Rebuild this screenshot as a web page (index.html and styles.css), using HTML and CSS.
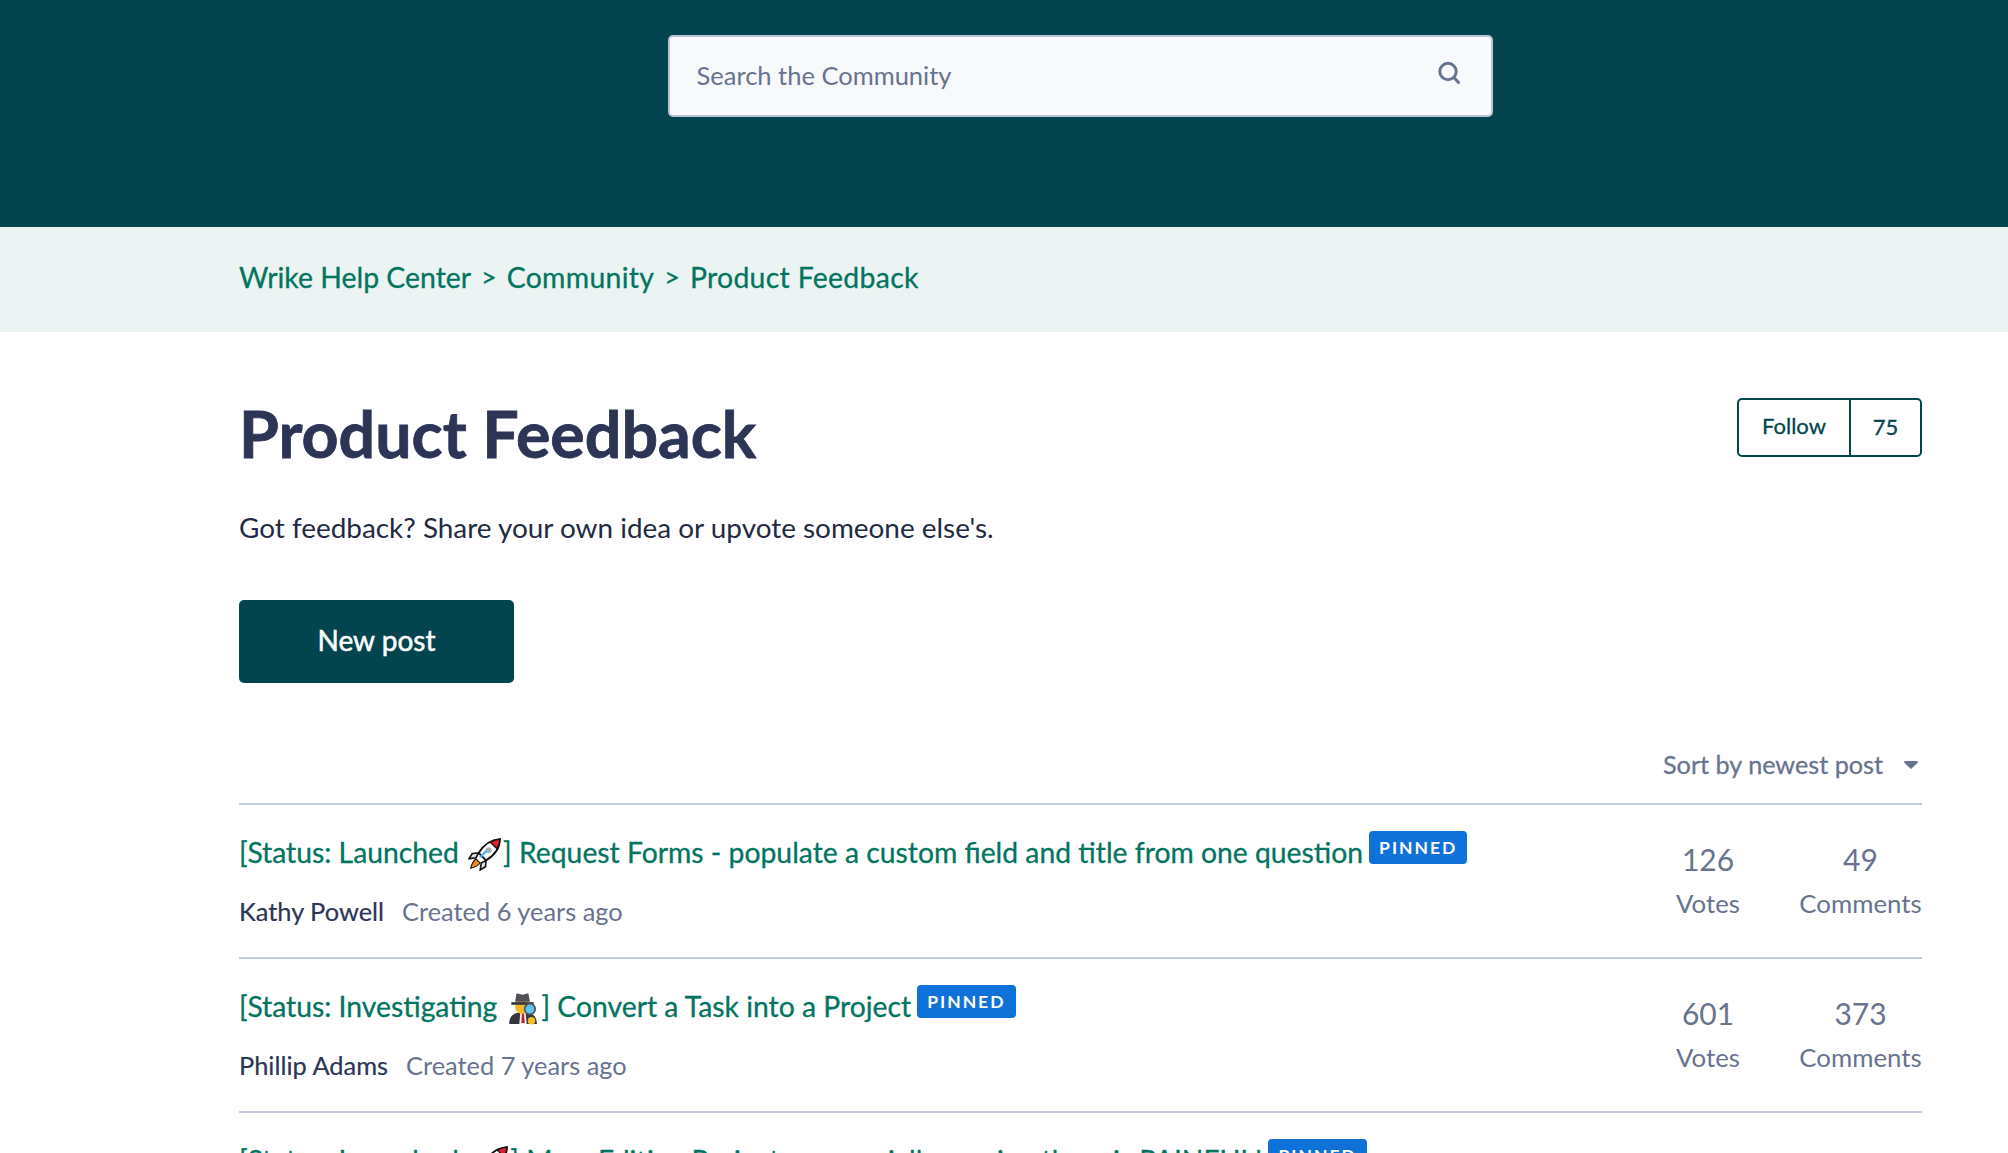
FILE: index.html
```html
<!DOCTYPE html>
<html lang="en">
<head>
    <meta charset="utf-8">
    <title>Product Feedback</title>
    <link rel="stylesheet" href="styles.css">
</head>
<body>

    <header class="hero">
        <form class="search">
            <span class="search-text">Search the Community</span>
            <svg class="search-icon" width="24" height="24" viewBox="0 0 24 24" fill="none" stroke="#68738f" stroke-width="3" stroke-linecap="round">
                <circle cx="11" cy="10.500" r="8.200"></circle>
                <path d="M17 16.500l4.500 5"></path>
            </svg>
        </form>
    </header>

    <nav class="crumbs">
        <a href="#">Wrike Help Center</a>
        <span class="sep">&gt;</span>
        <a href="#">Community</a>
        <span class="sep">&gt;</span>
        <a href="#">Product Feedback</a>
    </nav>

    <main class="content">
        <div class="topic-head">
            <h1>Product Feedback</h1>
            <div class="follow">
                <a href="#" class="follow-btn">Follow</a>
                <span class="follow-count">75</span>
            </div>
        </div>

        <p class="desc">Got feedback? Share your own idea or upvote someone else's.</p>

        <a href="#" class="new-post">New post</a>

        <div class="sort">
            <span>Sort by newest post</span>
            <svg class="caret" width="14" height="8" viewBox="0 0 14 8"><path d="M0 1.500Q0 0 1.500 0h11Q14 0 14 1.500L7 8z" fill="#68738f"></path></svg>
        </div>

        <ul class="posts">
            <li class="post">
                <div class="post-main">
                    <div class="post-title">
                        <a href="#">[Status: Launched
                            <svg class="emoji" viewBox="0 0 32 32"><path d="M30 2c-8 .5-15 5-20 13l7 7c8-5 13-12 13-20z" fill="#fff" stroke="#111" stroke-width="1.800"></path><path d="M30 2c-3 .2-6 1-9 2.800l6.200 6.200C29 8 30 5 30 2z" fill="#e0202e" stroke="#111" stroke-width="1.200"></path><circle cx="19.500" cy="12.500" r="2.800" fill="#a9b0b8"></circle><path d="M10 15l-6 .5-3 5 6.500-1zM17 22l-.5 6-5 3 1-6.500z" fill="#dfe6ec" stroke="#111" stroke-width="1.500"></path><path d="M11.500 19l6-6" stroke="#3db5ec" stroke-width="2"></path><path d="M7.500 20.500l4 4c-2 2.500-5 4-9 5 1-4 2.500-7 5-9z" fill="#f58a1f" stroke="#111" stroke-width="1"></path></svg>] Request Forms - populate a custom field and title from one question</a>
                        <span class="badge">PINNED</span>
                    </div>
                    <div class="post-meta">
                        <span class="author">Kathy Powell</span>
                        <span class="created">Created 6 years ago</span>
                    </div>
                </div>
                <div class="stat stat-votes"><b>126</b><span>Votes</span></div>
                <div class="stat stat-comments"><b>49</b><span>Comments</span></div>
            </li>
            <li class="post">
                <div class="post-main">
                    <div class="post-title">
                        <a href="#">[Status: Investigating
                            <svg class="emoji" viewBox="0 0 32 32"><path d="M3 31c0-8 5-11 13-11s13 3 13 11z" fill="#33363b"></path><path d="M13.500 20h5l1 11h-7z" fill="#f3f3f3"></path><path d="M15 21h2l.6 9h-3.200z" fill="#c4262e"></path><ellipse cx="15" cy="15" rx="6.500" ry="6.500" fill="#f6bb2b"></ellipse><path d="M8.500 10l1.500-8 5.500 1.500L21 2l1.500 8z" fill="#4f5156"></path><path d="M5 10.500h21v2.500H5z" fill="#33363b"></path><circle cx="22.500" cy="17" r="5" fill="#5ec4ef" stroke="#4a5560" stroke-width="1.600"></circle><circle cx="24" cy="28" r="3.500" fill="#f6bb2b"></circle></svg>] Convert a Task into a Project</a>
                        <span class="badge">PINNED</span>
                    </div>
                    <div class="post-meta">
                        <span class="author">Phillip Adams</span>
                        <span class="created">Created 7 years ago</span>
                    </div>
                </div>
                <div class="stat stat-votes"><b>601</b><span>Votes</span></div>
                <div class="stat stat-comments"><b>373</b><span>Comments</span></div>
            </li>
            <li class="post">
                <div class="post-main">
                    <div class="post-title">
                        <a href="#">[Status: Launched&nbsp;
                            <svg class="emoji" viewBox="0 0 32 32"><path d="M30 2c-8 .5-15 5-20 13l7 7c8-5 13-12 13-20z" fill="#fff" stroke="#111" stroke-width="1.800"></path><path d="M30 2c-3 .2-6 1-9 2.800l6.200 6.200C29 8 30 5 30 2z" fill="#e0202e" stroke="#111" stroke-width="1.200"></path></svg>] Mass Editing Projects - especially moving them is PAINFUL!</a>
                        <span class="badge">PINNED</span>
                    </div>
                </div>
            </li>
        </ul>
    </main>

</body>
</html>
```

FILE: styles.css
```css
html, body {
    height: 100%;
}

body {
    margin: 0;
    height: 1153px;
    overflow: hidden;
    font-family: "Lato", "Open Sans", sans-serif;
    color: #2f3941;
    background: #fff;
}

a {
    text-decoration: none;
}

.hero {
    height: 227px;
    box-sizing: border-box;
    padding-top: 35px;
    background: #03454f;
}

.search {
    width: 825px;
    height: 82px;
    box-sizing: border-box;
    margin: 0 auto;
    padding: 0 30px 2px 27px;
    transform: translateX(76px);
    display: flex;
    align-items: center;
    justify-content: space-between;
    background: #f8f9fb;
    border: 2px solid #b9c4d6;
    border-radius: 5px;
}

.search-text {
    font-size: 25.500px;
    color: #68738f;
}

.search-icon {
    margin-top: -4px;
}

.crumbs {
    height: 105px;
    box-sizing: border-box;
    padding: 0 0 6px 239px;
    display: flex;
    align-items: center;
    gap: 10px;
    background: #ebf4f2;
    font-size: 28.400px;
    -webkit-text-stroke: 0.3px #03745f;
}

.crumbs a {
    color: #03745f;
}

.crumbs .sep + a {
    letter-spacing: 0.3px;
}

.sep {
    color: #03745f;
    font-size: 27px;
}

.content {
    margin: 0 86px 0 239px;
}

.topic-head {
    display: flex;
    justify-content: space-between;
    align-items: flex-start;
    padding-top: 66px;
}

h1 {
    margin: 0;
    font-size: 64.500px;
    line-height: 70px;
    font-weight: 700;
    color: #2c3556;
    -webkit-text-stroke: 0.8px #2c3556;
}

.follow {
    display: flex;
    height: 59px;
    box-sizing: border-box;
    border: 2px solid #03454f;
    border-radius: 5px;
    font-size: 22px;
    color: #03454f;
    -webkit-text-stroke: 0.3px #03454f;
}

.follow-btn {
    width: 110px;
    padding-bottom: 5px;
    box-sizing: content-box;
    display: flex;
    align-items: center;
    justify-content: center;
    color: #03454f;
    border-right: 2px solid #03454f;
}

.follow-count {
    width: 69px;
    padding-bottom: 3px;
    display: flex;
    align-items: center;
    justify-content: center;
}

.desc {
    margin: 40px 0 0;
    font-size: 27.900px;
    line-height: 38px;
    color: #1f2a44;
}

.new-post {
    display: flex;
    align-items: center;
    justify-content: center;
    width: 275px;
    height: 83px;
    box-sizing: border-box;
    padding-bottom: 4px;
    margin-top: 54px;
    background: #03454f;
    border-radius: 5px;
    font-size: 28px;
    color: #fff;
    -webkit-text-stroke: 0.5px #fff;
}

.sort {
    display: flex;
    justify-content: flex-end;
    align-items: center;
    gap: 21px;
    height: 38px;
    margin-top: 62px;
    padding-right: 4px;
    font-size: 25.200px;
    color: #68738f;
    -webkit-text-stroke: 0.3px #68738f;
}

.caret {
    margin-top: 2px;
}

.posts {
    list-style: none;
    margin: 20px 0 0;
    padding: 0;
    border-top: 2px solid #c3cbdc;
}

.post {
    display: flex;
    height: 152px;
    border-bottom: 2px solid #c3cbdc;
}

.post-main {
    flex: 1;
    padding-top: 27px;
}

.post-title {
    display: flex;
    align-items: flex-start;
    gap: 6px;
    font-size: 28.300px;
    line-height: 40px;
    -webkit-text-stroke: 0.3px #03745f;
}

.post-title a {
    color: #03745f;
}

.emoji {
    width: 34px;
    height: 34px;
    vertical-align: -8px;
    margin: 0 1px 0 2px;
}

.badge {
    height: 33px;
    margin-top: -1px;
    padding: 0 10px;
    display: flex;
    align-items: center;
    background: #0f72d9;
    border-radius: 4px;
    font-size: 17.500px;
    font-weight: 700;
    letter-spacing: 2px;
    color: #fff;
    -webkit-text-stroke: 0;
}

.post-meta {
    margin-top: 20px;
    display: flex;
    gap: 18px;
    font-size: 25.400px;
    line-height: 38px;
}

.author {
    color: #2c3556;
    -webkit-text-stroke: 0.2px #2c3556;
}

.created {
    color: #68738f;
}

.stat {
    display: flex;
    flex-direction: column;
    align-items: center;
    padding-top: 33px;
    font-size: 25.800px;
    color: #68738f;
}

.stat b {
    font-size: 30px;
    font-weight: 400;
    line-height: 42px;
    margin-bottom: 8px;
}

.stat-votes {
    width: 62px;
}

.stat-comments {
    width: 123px;
    margin-left: 60px;
}
```
